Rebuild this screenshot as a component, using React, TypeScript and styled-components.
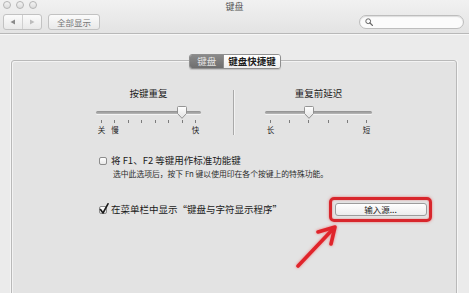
import React from "react";
import styled, { createGlobalStyle } from "styled-components";

const Global = createGlobalStyle`
  html, body { margin: 0; padding: 0; background: #ececec; overflow: hidden; }
  body { font-family: "Noto Sans CJK SC", "Noto Sans", sans-serif; color: #1e1e1e; }
`;

const Window = styled.div`
  position: relative;
  width: 469px;
  height: 293px;
  overflow: hidden;
  display: flex;
  flex-direction: column;
  background: #ebebeb;
`;

const Header = styled.div`
  height: 33px;
  background: linear-gradient(#f1f1f1, #e3e3e3);
  border-bottom: 1px solid #b8b8b8;
  box-shadow: 0 1px 0 #f7f7f7;
  display: flex;
  flex-direction: column;
  flex-shrink: 0;
`;

const TitleRow = styled.div`
  height: 12px;
  display: grid;
  grid-template-columns: 1fr auto 1fr;
  align-items: center;
`;

const Lights = styled.div`
  display: flex;
  gap: 5px;
  padding-left: 3px;
  align-self: start;
  margin-top: 1px;
`;

const Light = styled.span`
  width: 6px;
  height: 6px;
  border-radius: 50%;
  border: 1px solid #b4b4b4;
  background: linear-gradient(#f4f4f4, #dcdcdc);
`;

const Title = styled.div`
  font-size: 9px;
  line-height: 11px;
  color: #555;
  padding-top: 1px;
`;

const ToolRow = styled.div`
  display: flex;
  align-items: center;
  padding: 2px 5px 0 3px;
  height: 15px;
`;

const Segmented = styled.div`
  display: flex;
  height: 14px;
  border: 1px solid #c2c2c2;
  border-radius: 3px;
  background: linear-gradient(#fbfbfb, #e9e9e9);
  overflow: hidden;
`;

const NavHalf = styled.div<{ $last?: boolean }>`
  width: 18px;
  display: flex;
  align-items: center;
  justify-content: center;
  border-left: ${(p) => (p.$last ? "1px solid #d0d0d0" : "none")};
`;

const ToolButton = styled.div`
  margin-left: 6px;
  height: 14px;
  padding: 0 8px;
  border: 1px solid #c2c2c2;
  border-radius: 3px;
  background: linear-gradient(#fbfbfb, #e9e9e9);
  font-size: 8.5px;
  line-height: 14px;
  color: #777;
`;

const Search = styled.div`
  margin-left: auto;
  width: 105px;
  height: 14px;
  border: 1px solid #bdbdbd;
  border-radius: 8px;
  background: #fbfbfb;
  box-shadow: inset 0 1px 1px rgba(0, 0, 0, 0.12);
  display: flex;
  align-items: center;
  padding-left: 5px;
  box-sizing: border-box;
`;

const Body = styled.div`
  padding: 20px 12px 0 11px;
  display: flex;
  flex-direction: column;
`;

const TabBar = styled.div`
  align-self: center;
  margin-left: 2px;
  display: flex;
  height: 15px;
  border: 1px solid #8f8f8f;
  border-radius: 3px;
  overflow: hidden;
  position: relative;
  z-index: 1;
  box-sizing: border-box;
  box-shadow: 0 1px 1px rgba(0, 0, 0, 0.15);
`;

const Tab = styled.div<{ $active?: boolean }>`
  padding: 0 ${(p) => (p.$active ? "7px" : "4px")};
  font-size: 9.5px;
  line-height: 13px;
  font-weight: ${(p) => (p.$active ? 400 : 600)};
  color: ${(p) => (p.$active ? "#e4e4e4" : "#1c1c1c")};
  background: ${(p) =>
    p.$active ? "linear-gradient(#8a8a8a, #6e6e6e)" : "linear-gradient(#ffffff, #eeeeee)"};
  border-left: ${(p) => (p.$active ? "none" : "1px solid #8f8f8f")};
`;

const Panel = styled.div`
  margin-top: -9px;
  height: 260px;
  border: 1px solid #b9b9b9;
  border-radius: 3px;
  background: #e3e3e3;
  box-shadow: inset 1px 1px 0 #f3f3f3, 1px 0 0 #f7f7f7, -1px 0 0 #f5f5f5;
  display: flex;
  flex-direction: column;
  padding-top: 27px;
`;

const SliderRow = styled.div`
  display: flex;
  justify-content: center;
  gap: 22px;
  padding-right: 1px;
`;

const SliderGroup = styled.div`
  width: 125px;
  display: flex;
  flex-direction: column;
  align-items: center;
`;

const SliderLabel = styled.div`
  font-size: 9.5px;
  line-height: 11px;
  color: #1a1a1a;
`;

const TrackBox = styled.div<{ $w: number }>`
  position: relative;
  width: ${(p) => p.$w}px;
  height: 13px;
  margin-top: 7px;
  display: flex;
  align-items: center;
`;

const TrackLine = styled.div`
  width: 100%;
  height: 3px;
  border-radius: 2px;
  background: linear-gradient(#8f8f8f, #b9b9b9);
  box-shadow: 0 1px 0 #f4f4f4;
`;

const Thumb = styled.svg`
  position: absolute;
  top: 0;
  transform: translateX(-50%);
`;

const ScaleRow = styled.div<{ $w: number }>`
  width: ${(p) => p.$w}px;
  box-sizing: border-box;
  padding: 0 5px;
  display: flex;
  justify-content: space-between;
`;

const TickSlot = styled.div`
  width: 1px;
  display: flex;
  flex-direction: column;
  align-items: center;
`;

const Tick = styled.div`
  width: 1px;
  height: 3px;
  margin-top: 1px;
  background: #7c7c7c;
`;

const TickLabel = styled.div`
  font-size: 7.5px;
  line-height: 9px;
  margin-top: 2px;
  white-space: nowrap;
  color: #1e1e1e;
`;

const Divider = styled.div`
  width: 1px;
  height: 45px;
  margin-top: 2px;
  background: #a9a9a9;
  box-shadow: 1px 0 0 #f2f2f2;
`;

const Options = styled.div`
  padding: 20px 24px 0 87px;
  display: flex;
  flex-direction: column;
`;

const CheckLine = styled.div`
  display: flex;
  align-items: center;
  gap: 4px;
`;

const Box = styled.div`
  position: relative;
  width: 8px;
  height: 8px;
  border: 1px solid #8c8c8c;
  border-radius: 2px;
  background: linear-gradient(#ffffff, #e8e8e8);
  box-sizing: border-box;
  flex-shrink: 0;
`;

const Mark = styled.svg`
  position: absolute;
  left: -1px;
  top: -4px;
`;

const CheckText = styled.div`
  font-size: 9.5px;
  line-height: 11px;
  white-space: nowrap;
  color: #1a1a1a;
`;

const Hint = styled.div`
  margin: 3px 0 0 14px;
  font-size: 7.8px;
  line-height: 9px;
  white-space: nowrap;
  color: #2c2c2c;
`;

const Row2 = styled.div`
  margin-top: 19px;
  display: flex;
  align-items: center;
  justify-content: space-between;
`;

const Highlight = styled.div`
  width: 103px;
  height: 25px;
  box-sizing: border-box;
  border: 3px solid #d8262c;
  border-radius: 5px;
  box-shadow: 0 0 3px rgba(230, 40, 40, 0.55), inset 0 0 2px rgba(230, 40, 40, 0.5);
  display: flex;
  align-items: center;
  justify-content: center;
`;

const PushButton = styled.div`
  width: 92px;
  height: 13px;
  box-sizing: border-box;
  border: 1px solid #9c9c9c;
  border-radius: 3px;
  background: linear-gradient(#ffffff, #ececec);
  font-size: 8.5px;
  line-height: 11px;
  text-align: center;
  color: #1a1a1a;
`;

const Overlay = styled.svg`
  position: absolute;
  left: 0;
  top: 0;
  pointer-events: none;
`;

type SliderProps = {
  label: string;
  width: number;
  ticks: number;
  thumbAt: number;
  labels: Record<number, string>;
};

const Slider = ({ label, width, ticks, thumbAt, labels }: SliderProps) => {
  const thumbLeft = 5 + ((width - 10) * thumbAt) / (ticks - 1);
  return (
    <SliderGroup>
      <SliderLabel>{label}</SliderLabel>
      <TrackBox $w={width}>
        <TrackLine />
        <Thumb width="11" height="13" viewBox="0 0 11 13" style={{ left: thumbLeft }}>
          <defs>
            <linearGradient id="tg" x1="0" y1="0" x2="0" y2="1">
              <stop offset="0" stopColor="#ffffff" />
              <stop offset="1" stopColor="#e2e2e2" />
            </linearGradient>
          </defs>
          <path d="M1 1.5 Q1 0.5 2 0.5 H9 Q10 0.5 10 1.5 V7.5 L5.5 12.3 L1 7.5 Z" fill="url(#tg)" stroke="#8a8a8a" strokeWidth="0.9" />
        </Thumb>
      </TrackBox>
      <ScaleRow $w={width}>
        {Array.from({ length: ticks }).map((_, i) => (
          <TickSlot key={i}>
            <Tick />
            {labels[i] ? <TickLabel>{labels[i]}</TickLabel> : null}
          </TickSlot>
        ))}
      </ScaleRow>
    </SliderGroup>
  );
};

export default function App() {
  return (
    <>
      <Global />
      <Window>
        <Header>
          <TitleRow>
            <Lights>
              <Light />
              <Light />
              <Light />
            </Lights>
            <Title>键盘</Title>
            <div />
          </TitleRow>
          <ToolRow>
            <Segmented>
              <NavHalf>
                <svg width="6" height="6" viewBox="0 0 6 6"><path d="M5 0.5 L0.5 3 L5 5.5 Z" fill="#8a8a8a" /></svg>
              </NavHalf>
              <NavHalf $last>
                <svg width="6" height="6" viewBox="0 0 6 6"><path d="M1 0.5 L5.5 3 L1 5.5 Z" fill="#bdbdbd" /></svg>
              </NavHalf>
            </Segmented>
            <ToolButton>全部显示</ToolButton>
            <Search>
              <svg width="8" height="8" viewBox="0 0 8 8">
                <circle cx="3.2" cy="3.2" r="2.4" fill="none" stroke="#666" strokeWidth="1" />
                <path d="M5 5 L7.4 7.4" stroke="#666" strokeWidth="1.3" strokeLinecap="round" />
              </svg>
            </Search>
          </ToolRow>
        </Header>
        <Body>
          <TabBar>
            <Tab $active>键盘</Tab>
            <Tab>键盘快捷键</Tab>
          </TabBar>
          <Panel>
            <SliderRow>
              <Slider label="按键重复" width={105} ticks={8} thumbAt={6} labels={{ 0: "关", 1: "慢", 7: "快" }} />
              <Divider />
              <Slider label="重复前延迟" width={107} ticks={6} thumbAt={2} labels={{ 0: "长", 5: "短" }} />
            </SliderRow>
            <Options>
              <CheckLine>
                <Box />
                <CheckText>将 F1、F2 等键用作标准功能键</CheckText>
              </CheckLine>
              <Hint>选中此选项后，按下 Fn 键以使用印在各个按键上的特殊功能。</Hint>
              <Row2>
                <CheckLine>
                  <Box>
                    <Mark width="10" height="12" viewBox="0 0 10 12">
                      <path d="M1.5 6.5 L4 10 L9 0.8" fill="none" stroke="#1a1a1a" strokeWidth="1.6" strokeLinejoin="round" strokeLinecap="round" />
                    </Mark>
                  </Box>
                  <CheckText>在菜单栏中显示“键盘与字符显示程序”</CheckText>
                </CheckLine>
                <Highlight>
                  <PushButton>输入源...</PushButton>
                </Highlight>
              </Row2>
            </Options>
          </Panel>
        </Body>
        <Overlay width="469" height="293" viewBox="0 0 469 293">
          <g stroke="#e0242b" strokeWidth="3.6" strokeLinecap="round" strokeLinejoin="round" fill="none" style={{ filter: "drop-shadow(0 0 1.5px rgba(240,60,60,0.6))" }}>
            <path d="M298 266 L334 228" />
            <path d="M318 232 L335 227 L331 244" />
          </g>
        </Overlay>
      </Window>
    </>
  );
}
